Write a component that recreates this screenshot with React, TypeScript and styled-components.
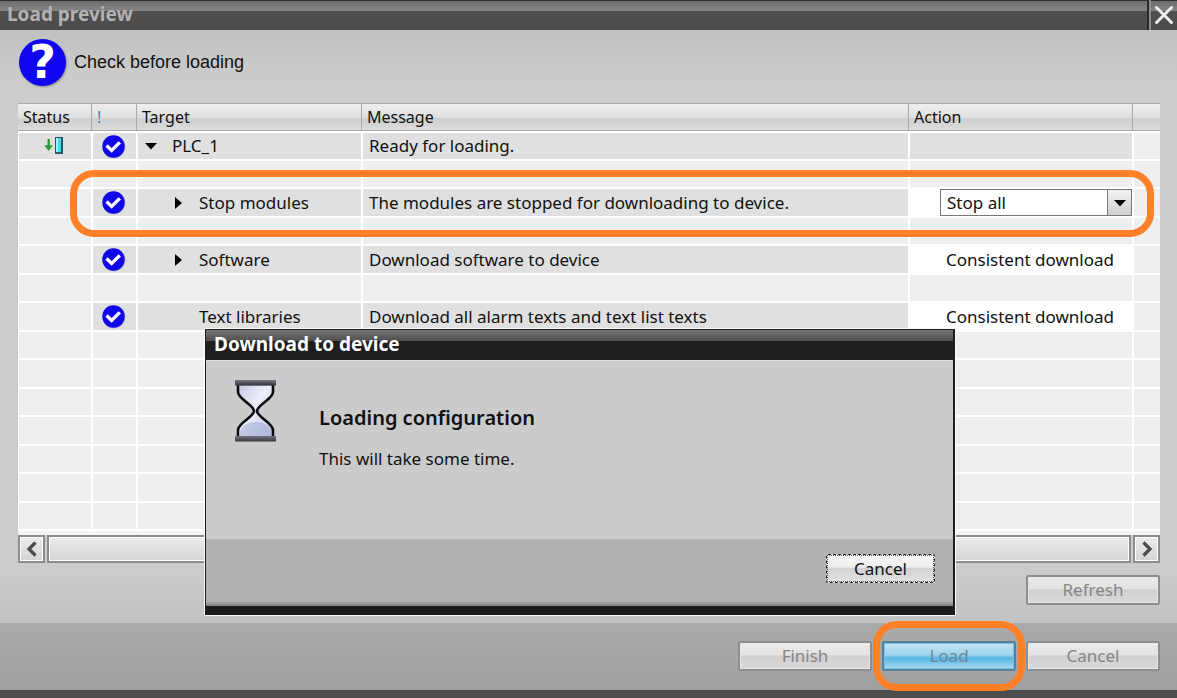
import React from "react";
import styled, { createGlobalStyle, css } from "styled-components";

const uiFont = `"Noto Sans", "Open Sans", sans-serif`;

const GlobalStyle = createGlobalStyle`
  *, *::before, *::after { box-sizing: border-box; }
  body { margin: 0; background: #4e4e4e; }
  button, select { font: inherit; color: inherit; margin: 0; }
`;

const Window = styled.main`
  position: relative;
  display: flex;
  flex-direction: column;
  min-height: 100vh;
  font: 17px/24px ${uiFont};
  color: #111;
  border-bottom: 8px solid #4d4d4d;
`;

const TitleBar = styled.header`
  display: flex;
  height: 30px;
  background: linear-gradient(#2e2c2d 0 1px, #6c6c6c 1px, #868686 11px, #4f4f4f 11px, #4b4b4b 100%);
`;

const Title = styled.h1`
  flex: 1;
  margin: 0;
  padding-left: 7px;
  font-size: 19px;
  line-height: 28px;
  font-weight: 700;
  color: #b2b2b2;
`;

const CloseButton = styled.button`
  display: flex;
  align-items: center;
  justify-content: center;
  width: 28px;
  padding: 0;
  border: 0;
  border-left: 2px solid #8d8d8d;
  background: none;
  box-shadow: -2px 0 0 #2b2b2b;
`;

const Content = styled.section`
  flex: 1;
  display: flex;
  flex-direction: column;
  padding: 9px 17px 18px 18px;
  background: linear-gradient(#c1c1c1, #cccccc 50px, #cccccc 540px, #c3c3c3);
`;

const Notice = styled.div`
  display: flex;
  align-items: center;
  gap: 8px;
  height: 46px;
  margin-bottom: 18px;
  padding-left: 1px;
  font: 18px/24px "Liberation Sans", Arial, sans-serif;
`;

const QuestionBadge = styled.span`
  display: flex;
  align-items: center;
  justify-content: center;
  width: 47px;
  height: 47px;
  border-radius: 50%;
  background: #1106f2;
  box-shadow: 1px 1px 2px #8a8a8a;
  color: #fff;
  font: 700 46px/46px "DejaVu Sans", sans-serif;
`;

const Grid = styled.table`
  width: 100%;
  table-layout: fixed;
  border-collapse: separate;
  border-spacing: 0;
  border-bottom: 4px solid #f4f4f4;
`;

const HeadCell = styled.th`
  height: 28px;
  padding: 0 0 0 5px;
  border-top: 1px solid #a9a9a9;
  border-bottom: 1px solid #a9a9a9;
  border-right: 1px solid #a9a9a9;
  background: linear-gradient(#efefef, #dedede 55%, #cecece 56%, #dcdcdc);
  font-size: 16px;
  font-weight: 400;
  line-height: 24px;
  text-align: left;
  &:last-child { border-right: 0; }
`;

const Mark = styled.span`
  color: #3f7fa8;
`;

const Row = styled.tr<{ $tall?: boolean }>`
  position: relative;
  height: ${(p) => (p.$tall ? 29 : 28)}px;
  &:first-child { height: 30px; }
  &:first-child > td { border-top: 2px solid #fff; }
`;

const Cell = styled.td<{ $tone?: "plain" | "shade" | "white" }>`
  padding: 0 0 0 6px;
  border: 0 solid #fff;
  border-width: 0 1px 2px;
  background: ${(p) => (p.$tone === "shade" ? "#e0e0e0" : p.$tone === "white" ? "#fff" : "#efefef")};
  line-height: 24px;
  white-space: nowrap;
  &:last-child { border-right: 0; }
  svg { display: block; }
`;

const IconBox = styled.div`
  display: flex;
  justify-content: center;
  margin-left: -9px;
`;

const TreeItem = styled.div<{ $level: number }>`
  display: flex;
  align-items: center;
  padding-left: ${(p) => (p.$level ? 27 : 0)}px;
`;

const Twisty = styled.span`
  display: flex;
  width: 28px;
`;

const ActionText = styled.div`
  padding-left: 30px;
`;

const SelectBox = styled.div`
  display: flex;
  position: relative;
  margin-left: 24px;
  height: 27px;
  border: 1px solid #767676;
  background: #fff;
`;

const Select = styled.select`
  flex: 1;
  min-width: 0;
  padding: 0 0 0 6px;
  border: 0;
  appearance: none;
  background: transparent;
  line-height: 24px;
`;

const SelectArrow = styled.span`
  position: absolute;
  top: 0;
  right: 0;
  bottom: 0;
  display: flex;
  align-items: center;
  justify-content: center;
  width: 24px;
  border-left: 1px solid #767676;
  background: linear-gradient(#f2f2f2, #cfcfcf);
  pointer-events: none;
`;

const Ring = styled.span<{ $area: "row" | "button" }>`
  position: absolute;
  inset: ${(p) => (p.$area === "row" ? "-19px 6px -19px 52px" : "-20px -9px")};
  z-index: 1;
  border: 7px solid #ff8027;
  border-radius: 24px;
  pointer-events: none;
`;

const ScrollBar = styled.div`
  display: flex;
  gap: 2px;
  height: 28px;
`;

const raised = css`
  border: 2px solid #8c8c8c;
  box-shadow: inset 0 0 0 1px #fff;
  background: linear-gradient(#ececec, #d4d4d4);
`;

const ScrollButton = styled.button`
  ${raised}
  display: flex;
  align-items: center;
  justify-content: center;
  width: 27px;
  padding: 0;
`;

const ScrollThumb = styled.div`
  ${raised}
  flex: 1;
`;

const Actions = styled.div`
  display: flex;
  justify-content: flex-end;
  margin-top: 12px;
`;

const Footer = styled.footer`
  display: flex;
  align-items: flex-start;
  justify-content: flex-end;
  gap: 10px;
  height: 67px;
  padding: 18px 17px 0;
  background: linear-gradient(#ababab, #a0a0a0);
`;

const ButtonSlot = styled.div`
  position: relative;
`;

const PushButton = styled.button<{ $primary?: boolean }>`
  display: block;
  width: 134px;
  height: 30px;
  padding: 0;
  border: 2px solid ${(p) => (p.$primary ? "#5b8095" : "#8e8e8e")};
  border-radius: 2px;
  background: ${(p) =>
    p.$primary
      ? "linear-gradient(#c4e4f2, #a0d4ec 45%, #55b4e2 58%, #a9dcf2)"
      : "linear-gradient(#ebebeb, #e2e2e2 45%, #d0d0d0 50%, #dadada)"};
  box-shadow: inset 0 0 0 1px ${(p) => (p.$primary ? "#6fc4ea" : "#e6e6e6")};
  line-height: 24px;
  color: ${(p) => (p.$primary ? "#6b8798" : "#858585")};
`;

const Dialog = styled.section`
  position: absolute;
  top: 329px;
  left: 205px;
  right: 222px;
  z-index: 2;
  border: 1px solid #1d1d1d;
  border-width: 1px 2px 9px 1px;
  background: #cbcbcb;
  box-shadow: 0 0 0 1px #fafafa;
`;

const DialogTitle = styled.h2`
  height: 30px;
  margin: 0;
  padding-left: 8px;
  background: linear-gradient(#747474, #4f4f4f 11px, #1e1e1e 11px);
  font-size: 19px;
  line-height: 28px;
  font-weight: 700;
  color: #fff;
`;

const DialogBody = styled.div`
  display: flex;
  gap: 39px;
  height: 179px;
  padding: 18px 28px 0;
  border-top: 1px solid #e0e0e0;
`;

const DialogText = styled.div`
  padding-top: 27px;
`;

const DialogHeading = styled.h3`
  margin: 0 0 17px;
  font-size: 20px;
  line-height: 24px;
  font-weight: 600;
`;

const Paragraph = styled.p`
  margin: 0;
`;

const DialogFooter = styled.div`
  display: flex;
  justify-content: flex-end;
  height: 67px;
  padding: 15px 18px 0;
  background: linear-gradient(#b1b1b1 62px, #7d7d7d 67px);
`;

const DialogButton = styled.button`
  width: 109px;
  height: 29px;
  padding: 0;
  border: 1px dashed #222;
  border-radius: 2px;
  outline: 1px dotted #555;
  outline-offset: -2px;
  background: linear-gradient(#f6f6f6, #eeeeee 45%, #d2d2d2 50%, #e2e2e2);
  line-height: 24px;
`;

const CheckIcon = () => (
  <svg width="25" height="25" viewBox="0 0 25 25" role="img" aria-label="OK">
    <circle cx="13" cy="13" r="11.4" fill="#8f8fb0" opacity=".5" />
    <circle cx="12.5" cy="12.5" r="11.2" fill="#1108ea" />
    <path d="M5.6 11.6l5 4.8 8.2-8" fill="none" stroke="#fff" strokeWidth="3.4" />
  </svg>
);

const DownloadIcon = () => (
  <svg width="20" height="20" viewBox="0 0 20 20" role="img" aria-label="Download">
    <path d="M4.7 3v9" stroke="#2b9a3a" strokeWidth="2.4" />
    <path d="M0.3 9.2h8.8L4.7 15z" fill="#2b9a3a" />
    <path d="M11 1h8v17h-8z" fill="#2b5566" />
    <path d="M12 2h5v14h-5z" fill="#4fd4ea" />
    <path d="M12 2h2v14h-2z" fill="#a9f1fa" />
  </svg>
);

const Triangle = ({ open }: { open?: boolean }) => (
  <svg width="14" height="14" viewBox="0 0 14 14" aria-hidden="true">
    <path d={open ? "M1 4h12L7 10.5z" : "M4 1v12l7-6z"} fill="#000" />
  </svg>
);

const Chevron = ({ back }: { back?: boolean }) => (
  <svg width="12" height="16" viewBox="0 0 12 16" aria-hidden="true">
    <path d={back ? "M9.5 1.5L3 8l6.5 6.5" : "M2.5 1.5L9 8l-6.5 6.5"} fill="none" stroke="#4a4a4a" strokeWidth="3.2" />
  </svg>
);

const Hourglass = () => (
  <svg width="46" height="64" viewBox="0 0 46 64" aria-hidden="true">
    <defs>
      <linearGradient id="glass" x1="0" y1="0" x2="1" y2="1">
        <stop offset="0" stopColor="#c3c9e2" />
        <stop offset=".45" stopColor="#eef0fa" />
        <stop offset="1" stopColor="#b4bcdc" />
      </linearGradient>
      <linearGradient id="plate" x1="0" y1="0" x2="0" y2="1">
        <stop offset="0" stopColor="#77757f" />
        <stop offset="1" stopColor="#36343c" />
      </linearGradient>
    </defs>
    <path
      d="M4 5v8C4 20 20 26 20 32S4 44 4 51v8h35v-8C39 44 23 38 23 32S39 20 39 13V5z"
      fill="url(#glass)"
      stroke="#0b0b10"
      strokeWidth="2.6"
    />
    <path d="M6 57v-5c3-6 8-9 15.500-9S34 46 37 52v5z" fill="#a9b3d8" opacity=".6" />
    <rect x="1" y="1" width="41" height="5.500" fill="url(#plate)" />
    <rect x="1" y="57" width="41" height="5.500" fill="url(#plate)" />
  </svg>
);

type Entry = {
  target: string;
  message: string;
  level: number;
  twisty?: "open" | "closed";
  status?: boolean;
  action?: string;
  choice?: boolean;
};

const entries: Entry[] = [
  { target: "PLC_1", message: "Ready for loading.", level: 0, twisty: "open", status: true },
  {
    target: "Stop modules",
    message: "The modules are stopped for downloading to device.",
    level: 1,
    twisty: "closed",
    action: "Stop all",
    choice: true,
  },
  {
    target: "Software",
    message: "Download software to device",
    level: 1,
    twisty: "closed",
    action: "Consistent download",
  },
  {
    target: "Text libraries",
    message: "Download all alarm texts and text list texts",
    level: 1,
    action: "Consistent download",
  },
];

const ROW_COUNT = 14;

const EmptyRow = ({ tall }: { tall: boolean }) => (
  <Row $tall={tall}>
    <Cell />
    <Cell />
    <Cell />
    <Cell />
    <Cell />
    <Cell />
  </Row>
);

const EntryRow = ({ entry }: { entry: Entry }) => (
  <Row $tall>
    <Cell $tone={entry.status ? "shade" : "plain"}>
      {entry.choice && <Ring $area="row" />}
      {entry.status && (
        <IconBox>
          <DownloadIcon />
        </IconBox>
      )}
    </Cell>
    <Cell $tone="shade">
      <IconBox>
        <CheckIcon />
      </IconBox>
    </Cell>
    <Cell $tone="shade">
      <TreeItem $level={entry.level}>
        <Twisty>{entry.twisty && <Triangle open={entry.twisty === "open"} />}</Twisty>
        {entry.target}
      </TreeItem>
    </Cell>
    <Cell $tone="shade">{entry.message}</Cell>
    <Cell $tone={entry.action ? "white" : "shade"}>
      {entry.choice ? (
        <SelectBox>
          <Select aria-label="Action for stop modules" defaultValue={entry.action}>
            <option>Stop all</option>
            <option>No action</option>
          </Select>
          <SelectArrow>
            <Triangle open />
          </SelectArrow>
        </SelectBox>
      ) : (
        entry.action && <ActionText>{entry.action}</ActionText>
      )}
    </Cell>
    <Cell />
  </Row>
);

export default function App() {
  return (
    <>
      <GlobalStyle />
      <Window>
        <TitleBar>
          <Title>Load preview</Title>
          <CloseButton aria-label="Close">
            <svg width="20" height="20" viewBox="0 0 20 20" aria-hidden="true">
              <path d="M2.500 2.500l15 15M17.500 2.500l-15 15" stroke="#f0f0f0" strokeWidth="3" strokeLinecap="round" />
            </svg>
          </CloseButton>
        </TitleBar>

        <Content>
          <Notice>
            <QuestionBadge aria-hidden="true">?</QuestionBadge>
            Check before loading
          </Notice>

          <Grid>
            <colgroup>
              <col style={{ width: 74 }} />
              <col style={{ width: 45 }} />
              <col style={{ width: 225 }} />
              <col />
              <col style={{ width: 224 }} />
              <col style={{ width: 27 }} />
            </colgroup>
            <thead>
              <tr>
                <HeadCell>Status</HeadCell>
                <HeadCell>
                  <Mark>!</Mark>
                </HeadCell>
                <HeadCell>Target</HeadCell>
                <HeadCell>Message</HeadCell>
                <HeadCell>Action</HeadCell>
                <HeadCell aria-label="More" />
              </tr>
            </thead>
            <tbody>
              {Array.from({ length: ROW_COUNT }, (_, i) => {
                const entry = i % 2 === 0 ? entries[i / 2] : undefined;
                return entry ? <EntryRow key={i} entry={entry} /> : <EmptyRow key={i} tall={i % 2 === 0} />;
              })}
            </tbody>
          </Grid>

          <ScrollBar>
            <ScrollButton aria-label="Scroll left">
              <Chevron back />
            </ScrollButton>
            <ScrollThumb />
            <ScrollButton aria-label="Scroll right">
              <Chevron />
            </ScrollButton>
          </ScrollBar>

          <Actions>
            <PushButton disabled>Refresh</PushButton>
          </Actions>
        </Content>

        <Footer>
          <PushButton disabled>Finish</PushButton>
          <ButtonSlot>
            <PushButton $primary disabled>
              Load
            </PushButton>
            <Ring $area="button" />
          </ButtonSlot>
          <PushButton disabled>Cancel</PushButton>
        </Footer>

        <Dialog role="dialog" aria-labelledby="download-title">
          <DialogTitle id="download-title">Download to device</DialogTitle>
          <DialogBody>
            <Hourglass />
            <DialogText>
              <DialogHeading>Loading configuration</DialogHeading>
              <Paragraph>This will take some time.</Paragraph>
            </DialogText>
          </DialogBody>
          <DialogFooter>
            <DialogButton>Cancel</DialogButton>
          </DialogFooter>
        </Dialog>
      </Window>
    </>
  );
}
